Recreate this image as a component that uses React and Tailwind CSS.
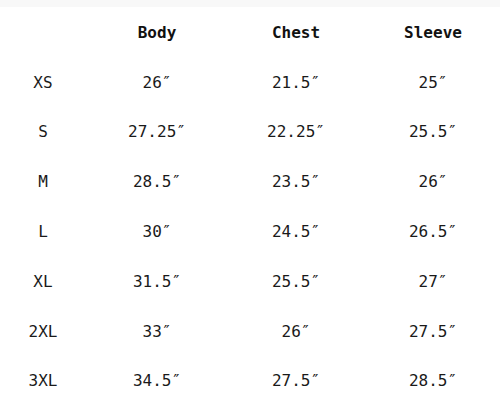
import React from 'react';

const rows = [
  ['XS', '26″', '21.5″', '25″'],
  ['S', '27.25″', '22.25″', '25.5″'],
  ['M', '28.5″', '23.5″', '26″'],
  ['L', '30″', '24.5″', '26.5″'],
  ['XL', '31.5″', '25.5″', '27″'],
  ['2XL', '33″', '26″', '27.5″'],
  ['3XL', '34.5″', '27.5″', '28.5″'],
];

const cols = 'grid grid-cols-[86px_142px_136px_138px] items-center h-[49.8px]';

const App = () => {
  return (
    <div className="w-[500px] h-[401px] overflow-hidden bg-white text-[16px] text-[#1a1a1a] font-['DejaVu_Sans_Mono',monospace]">
      <div className="h-[7px] bg-[#f8f8f8]" />
      <div className="w-[502px] pt-[1px]">
        {/* header */}
        <div className={cols + ' font-bold text-[#111]'}>
          <div />
          <div className="text-center">Body</div>
          <div className="text-center">Chest</div>
          <div className="text-center">Sleeve</div>
        </div>
        {rows.map((r) => (
          <div key={r[0]} className={cols}>
            {r.map((c, i) => (
              <div key={i} className="text-center">{c}</div>
            ))}
          </div>
        ))}
      </div>
    </div>
  );
};

export default App;
